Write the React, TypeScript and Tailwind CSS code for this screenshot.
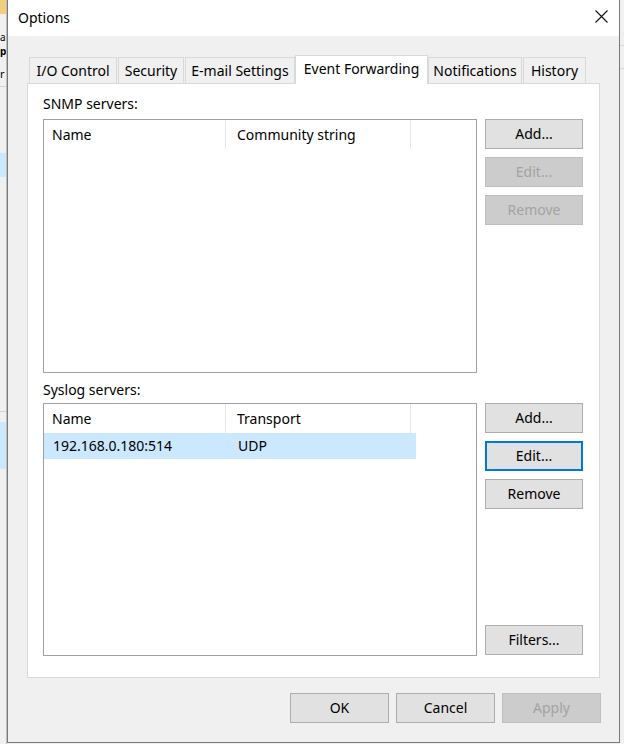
import React from "react";

function Btn({
  label,
  disabled,
  focused,
  w = "w-[98px]",
}: {
  label: string;
  disabled?: boolean;
  focused?: boolean;
  w?: string;
}) {
  const base = `${w} h-[30px] flex items-center justify-center shrink-0`;
  if (disabled)
    return (
      <div className={`${base} bg-[#cccccc] border border-[#bfbfbf] text-[#a3a3a3]`}>
        {label}
      </div>
    );
  if (focused)
    return (
      <div className={`${base} bg-[#e1e1e1] border-2 border-[#0078d7] text-black`}>
        {label}
      </div>
    );
  return (
    <div className={`${base} bg-[#e1e1e1] border border-[#adadad] text-black`}>
      {label}
    </div>
  );
}

function ListBox({
  col2,
  rows,
  height,
}: {
  col2: string;
  rows: [string, string][];
  height: string;
}) {
  return (
    <div className={`w-[434px] ${height} border border-[#a0a0a0] bg-white flex flex-col`}>
      <div className="h-[29px] flex items-stretch shrink-0">
        <div className="w-[182px] border-r border-[#e5e5e5] pl-[8px] flex items-center">
          Name
        </div>
        <div className="w-[185px] border-r border-[#e5e5e5] pl-[11px] flex items-center">
          {col2}
        </div>
      </div>
      {rows.map((r, i) => (
        <div key={i} className="w-[372px] h-[26px] bg-[#cce8ff] flex items-center">
          <div className="w-[182px] pl-[9px]">{r[0]}</div>
          <div className="pl-[12px]">{r[1]}</div>
        </div>
      ))}
    </div>
  );
}

export default function App() {
  const tabs: { label: string; w: string; active?: boolean; gap?: boolean }[] = [
    { label: "I/O Control", w: "w-[88px]", gap: true },
    { label: "Security", w: "w-[66px]", gap: true },
    { label: "E-mail Settings", w: "w-[110px]" },
    { label: "Event Forwarding", w: "w-[133px]", active: true },
    { label: "Notifications", w: "w-[94px]", gap: true },
    { label: "History", w: "w-[63px]" },
  ];
  return (
    <div className="w-[624px] h-[744px] flex bg-[#f0f0f0] overflow-hidden font-['Noto_Sans',sans-serif] text-[14px] text-black leading-[20px]">
      {/* background app on the left */}
      <div className="w-[7px] h-full flex shrink-0">
        <div className="w-[6px] h-full flex flex-col overflow-hidden bg-[#f0f0f0]">
          <div className="h-[14px] bg-[#f3cf7c] shrink-0" />
          <div className="h-[17px] shrink-0" />
          <div className="h-[12px] text-[10px] leading-[12px] overflow-hidden shrink-0">a</div>
          <div className="h-[2px] shrink-0" />
          <div className="h-[12px] text-[10px] leading-[12px] overflow-hidden shrink-0 font-bold">p</div>
          <div className="h-[10px] shrink-0" />
          <div className="h-[13px] text-[11px] leading-[13px] overflow-hidden shrink-0">r</div>
          <div className="h-[6px] shrink-0" />
          <div className="h-px bg-[#d4d4d4] shrink-0" />
          <div className="h-[66px] shrink-0" />
          <div className="h-[24px] bg-[#cce8ff] shrink-0" />
          <div className="h-[234px] shrink-0" />
          <div className="h-px bg-[#d4d4d4] shrink-0" />
          <div className="h-[10px] shrink-0" />
          <div className="h-[47px] bg-[#cce8ff] shrink-0" />
        </div>
        <div className="w-px h-full bg-[#bdbdbd]" />
      </div>

      {/* dialog */}
      <div className="w-[613px] h-[743px] shrink-0 flex flex-col border-l border-r border-b border-[#7a7a7a] bg-[#f0f0f0]">
        <div className="h-[36px] bg-white flex items-center justify-between pl-[10px] pr-[11px] shrink-0">
          <span className="text-[14px]">Options</span>
          <svg width="13" height="13" viewBox="0 0 13 13" className="mt-[-3px]">
            <path d="M0.5 0.5 L12.5 12.5 M12.5 0.5 L0.5 12.5" stroke="#111" strokeWidth="1.1" fill="none" />
          </svg>
        </div>

        <div className="flex flex-col pt-[19px] pl-[19px] pr-[19px] shrink-0">
          {/* tabs */}
          <div className="h-[28px] flex items-end pl-[2px] relative z-10">
            {tabs.map((t) =>
              t.active ? (
                <div
                  key={t.label}
                  className={`${t.w} h-[29px] -mb-px bg-white border-l border-r border-t border-[#d9d9d9] flex items-center justify-center shrink-0 pb-[2px]`}
                >
                  {t.label}
                </div>
              ) : (
                <div
                  key={t.label}
                  className={`${t.w} h-[26px] bg-[#f0f0f0] border-l border-r border-t border-[#d9d9d9] flex items-center justify-center shrink-0 ${t.gap ? "mr-px" : ""}`}
                >
                  {t.label}
                </div>
              )
            )}
          </div>

          {/* panel */}
          <div className="h-[595px] border border-[#d9d9d9] bg-white flex flex-col pl-[15px] pr-[15px]">
            <div className="pt-[10px] h-[35px] shrink-0">SNMP servers:</div>
            <div className="flex gap-[8px]">
              <ListBox col2="Community string" rows={[]} height="h-[254px]" />
              <div className="flex flex-col gap-[8px]">
                <Btn label="Add..." />
                <Btn label="Edit..." disabled />
                <Btn label="Remove" disabled />
              </div>
            </div>
            <div className="pt-[7px] h-[30px] shrink-0">Syslog servers:</div>
            <div className="flex gap-[8px]">
              <ListBox col2="Transport" rows={[["192.168.0.180:514", "UDP"]]} height="h-[253px]" />
              <div className="flex flex-col gap-[8px] h-[252px]">
                <Btn label="Add..." />
                <Btn label="Edit..." focused />
                <Btn label="Remove" />
                <div className="flex-1" />
                <Btn label="Filters..." />
              </div>
            </div>
          </div>
        </div>

        <div className="flex justify-end gap-[7px] pr-[18px] mt-[15px]">
          <Btn label="OK" w="w-[99px]" />
          <Btn label="Cancel" w="w-[99px]" />
          <Btn label="Apply" w="w-[99px]" disabled />
        </div>
      </div>

      {/* background app on the right */}
      <div className="w-[4px] h-full flex flex-col shrink-0 bg-[#f0f0f0]">
        <div className="h-[45px] shrink-0" />
        <div className="h-px bg-[#d9d9d9] shrink-0" />
        <div className="h-[22px] shrink-0" />
        <div className="h-px bg-[#d9d9d9] shrink-0" />
      </div>
    </div>
  );
}
